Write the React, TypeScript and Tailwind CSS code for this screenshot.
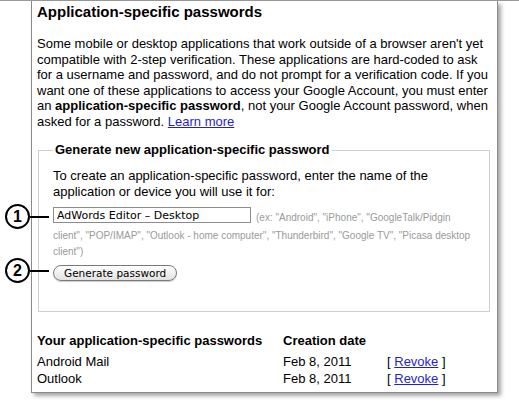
import React from "react";

function Callout({ n, top }: { n: number; top: number }) {
    return (
        <div className="absolute left-[5px] flex items-center" style={{ top }}>
            <div className="w-[25px] h-[25px] rounded-full border-2 border-black bg-white flex items-center justify-center text-[16px] font-bold leading-none">
                {n}
            </div>
            <div className="w-[19px] h-[2px] bg-black" />
        </div>
    );
}

export default function App() {
    return (
        <div className="relative w-[519px] h-[413px] bg-white text-black font-['Liberation_Sans',Arial,sans-serif] overflow-hidden">
            <div className="h-[1px] bg-[#9a9a9a] w-full" />
            <div className="ml-[31px] w-[467px] border-x border-b border-[#8a8a8a] shadow-[3px_3px_4px_rgba(0,0,0,0.35)] pl-[5px] pr-[8px] pt-[2px] pb-[5px]">
                <h1 className="text-[15px] font-bold leading-[18px]">Application-specific passwords</h1>
                <p className="mt-[15px] text-[13px] leading-[15.5px] w-[452px]">
                    Some mobile or desktop applications that work outside of a browser aren't yet compatible with 2-step
                    verification. These applications are hard-coded to ask for a username and password, and do not
                    prompt for a verification code. If you want one of these applications to access your Google Account,
                    you must enter an <b>application-specific password</b>, not your Google Account password, when asked
                    for a password.{" "}
                    <a href="#" className="text-[#1f1fd6] underline">
                        Learn more
                    </a>
                </p>
                <fieldset className="mt-[13px] ml-[1px] w-[452px] border border-[#cfcfcf] pl-[14px] pr-[10px] pb-[27px] pt-0 m-0">
                    <legend className="text-[13px] font-bold leading-[16px] px-[2px]">
                        Generate new application-specific password
                    </legend>
                    <p className="mt-[10px] text-[13px] leading-[15.5px]">
                        To create an application-specific password, enter the name of the application or device you will
                        use it for:
                    </p>
                    <div className="mt-[8px] text-[10px] leading-[15px] text-[#9a9a9a]">
                        <input
                            type="text"
                            defaultValue="AdWords Editor – Desktop"
                            className="w-[198px] h-[16px] border border-[#8c8c8c] px-[3px] text-[11px] text-black font-['DejaVu_Sans',sans-serif] align-middle mr-[5px] mb-[4px] outline-none"
                        />
                        <span className="align-middle">
                            (ex: "Android", "iPhone", "GoogleTalk/Pidgin client", "POP/IMAP", "Outlook - home computer",
                            "Thunderbird", "Google TV", "Picasa desktop client")
                        </span>
                    </div>
                    <button
                        type="button"
                        className="mt-[6px] h-[16px] px-[10px] rounded-full border border-[#7a7a7a] bg-gradient-to-b from-white to-[#e2e2e2] text-[10.5px] leading-[14px] font-['DejaVu_Sans',sans-serif] shadow-[0_1px_1px_rgba(0,0,0,0.2)]"
                    >
                        Generate password
                    </button>
                </fieldset>
                <div className="mt-[20px] grid grid-cols-[246px_104px_auto] text-[13px] leading-[17px]">
                    <div className="font-bold mb-[4px]">Your application-specific passwords</div>
                    <div className="font-bold mb-[4px]">Creation date</div>
                    <div />
                    <div>Android Mail</div>
                    <div>Feb 8, 2011</div>
                    <div>
                        [{" "}
                        <a href="#" className="text-[#1f1fd6] underline">
                            Revoke
                        </a>{" "}
                        ]
                    </div>
                    <div>Outlook</div>
                    <div>Feb 8, 2011</div>
                    <div>
                        [{" "}
                        <a href="#" className="text-[#1f1fd6] underline">
                            Revoke
                        </a>{" "}
                        ]
                    </div>
                </div>
            </div>
            <Callout n={1} top={204} />
            <Callout n={2} top={258} />
        </div>
    );
}
